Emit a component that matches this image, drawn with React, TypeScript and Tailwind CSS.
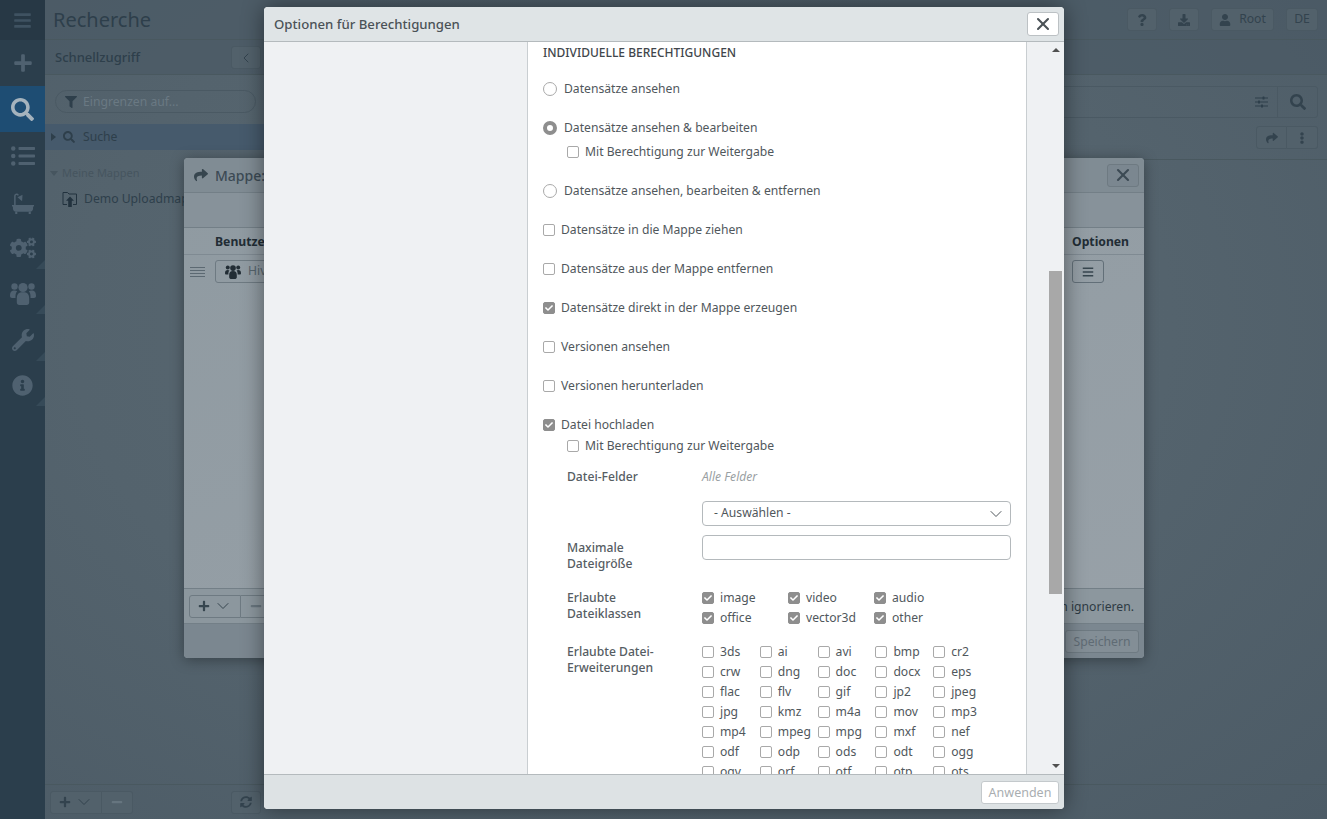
import { ChevronDown, ChevronLeft, X } from "lucide-react";
import {
  FaBars,
  FaCheck,
  FaCogs,
  FaDownload,
  FaEllipsisV,
  FaFilter,
  FaInfoCircle,
  FaListUl,
  FaMinus,
  FaPlus,
  FaQuestion,
  FaSearch,
  FaShare,
  FaSyncAlt,
  FaUser,
  FaWrench,
} from "react-icons/fa";

const extensions = [
  "3ds", "ai", "avi", "bmp", "cr2",
  "crw", "dng", "doc", "docx", "eps",
  "flac", "flv", "gif", "jp2", "jpeg",
  "jpg", "kmz", "m4a", "mov", "mp3",
  "mp4", "mpeg", "mpg", "mxf", "nef",
  "odf", "odp", "ods", "odt", "ogg",
  "ogv", "orf", "otf", "otp", "ots",
];

const classes = [
  "image", "video", "audio",
  "office", "vector3d", "other",
];

function GroupIcon({ className = "" }: { className?: string }) {
  return (
    <svg className={className} viewBox="0 0 26 24" fill="currentColor">
      <circle cx="4.5" cy="5.5" r="3.2" />
      <circle cx="21.5" cy="5.5" r="3.2" />
      <path d="M0 15c0-4 1.5-5.6 4.5-5.6 1.2 0 2 .3 2.7.8C6 11.500 5.500 13 5.500 15.500V17H2c-1.200 0-2-.8-2-2z" />
      <path d="M26 15c0-4-1.500-5.600-4.500-5.600-1.200 0-2 .3-2.700.8 1.200 1.300 1.700 2.800 1.700 5.300V17H24c1.200 0 2-.8 2-2z" />
      <circle cx="13" cy="6.500" r="4.600" />
      <path d="M6.800 18c0-5 1.700-6.700 6.200-6.700s6.200 1.700 6.200 6.700v3.500c0 1.400-1 2.500-2.400 2.500H9.200c-1.400 0-2.400-1.100-2.400-2.500z" />
    </svg>
  );
}

function BathIcon({ className = "" }: { className?: string }) {
  return (
    <svg className={className} viewBox="0 0 24 24" fill="currentColor">
      <path d="M0 13h24v1.800h-1V17c0 2-1.400 3.500-3.300 3.500H4.300C2.400 20.500 1 19 1 17v-2.200H0z" />
      <path d="M3.500 20.500h2.300V23H3.500zM18.200 20.500h2.300V23h-2.300z" />
      <path d="M2.300 13V3.500C2.300 1.600 3.600.5 5 .5c1.200 0 2.200.7 2.600 1.800L6.300 3C6.100 2.500 5.600 2.200 5 2.200c-.6 0-1 .5-1 1.300V13z" />
      <path d="M6 4.500L11.500 1.800 11 9z" />
    </svg>
  );
}

function SlidersIcon({ className = "" }: { className?: string }) {
  return (
    <svg className={className} viewBox="0 0 13 12" fill="currentColor">
      <path d="M0 1.500h13v1H0zM0 5.500h13v1H0zM0 9.500h13v1H0z" />
      <rect x="7.500" y="0.500" width="2" height="3" rx="0.500" />
      <rect x="3" y="4.500" width="2" height="3" rx="0.500" />
      <rect x="6" y="8.500" width="2" height="3" rx="0.500" />
    </svg>
  );
}

function Check({ on = false }: { on?: boolean }) {
  return (
    <span
      className={`-mt-px flex h-3 w-3 shrink-0 items-center justify-center rounded-[2px] border ${
        on ? "border-[#8e8e8e] bg-[#8e8e8e]" : "border-[#a9a9a9] bg-white"
      }`}
    >
      {on && <FaCheck className="h-2 w-2 text-white" />}
    </span>
  );
}

function Radio({ on = false }: { on?: boolean }) {
  return (
    <span
      className={`-mt-px h-[14px] w-[14px] shrink-0 rounded-full bg-white ${
        on ? "border-[4px] border-[#8e8e8e]" : "border border-[#a9a9a9]"
      }`}
    />
  );
}

function RadioRow({ label, on, className = "" }: { label: string; on?: boolean; className?: string }) {
  return (
    <div className={`flex h-5 items-center gap-[7px] ${className}`}>
      <Radio on={on} />
      <span>{label}</span>
    </div>
  );
}

function CheckRow({ label, on, className = "" }: { label: string; on?: boolean; className?: string }) {
  return (
    <div className={`flex h-5 items-center gap-[6px] ${className}`}>
      <Check on={on} />
      <span className="whitespace-nowrap">{label}</span>
    </div>
  );
}

function DimButton({ children, className = "" }: { children: React.ReactNode; className?: string }) {
  return (
    <div
      className={`flex h-[23px] items-center justify-center rounded-[3px] border border-[#4a5963] bg-[#52616b] text-[#33434e] ${className}`}
    >
      {children}
    </div>
  );
}

function NavItem({
  icon,
  active = false,
  corner = false,
  className = "",
}: {
  icon: React.ReactNode;
  active?: boolean;
  corner?: boolean;
  className?: string;
}) {
  return (
    <div
      className={`relative flex h-[46px] items-center justify-center text-[#4f6170] ${
        active ? "bg-[#1e4d73] text-[#a5b3bd]" : ""
      } ${className}`}
    >
      {icon}
      {corner && (
        <svg className="absolute bottom-[2px] right-0" width="9" height="9" viewBox="0 0 9 9">
          <path d="M9 0v9H0z" fill="#364a58" />
        </svg>
      )}
    </div>
  );
}

function Sidebar() {
  return (
    <div className="flex w-[45px] shrink-0 flex-col bg-[#2b3e4c]">
      <div className="flex h-10 items-center justify-center bg-[#273845] text-[#3f5261]">
        <FaBars className="h-[19px] w-[19px]" />
      </div>
      <div className="flex flex-col">
        <NavItem icon={<FaPlus className="h-5 w-5" />} />
        <NavItem active icon={<FaSearch className="h-[23px] w-[23px]" />} />
        <NavItem className="mt-[1px]" icon={<FaListUl className="h-6 w-6" />} />
        <NavItem className="mt-[2px]" icon={<BathIcon className="h-[22px] w-[24px]" />} />
        <NavItem corner className="-mt-[2px]" icon={<FaCogs className="h-[26px] w-[26px]" />} />
        <NavItem corner className="-mt-[1px]" icon={<GroupIcon className="h-6 w-[26px]" />} />
        <NavItem corner className="mt-[1px]" icon={<FaWrench className="h-[22px] w-[22px]" />} />
        <NavItem corner className="-mt-[1px]" icon={<FaInfoCircle className="h-[21px] w-[21px]" />} />
      </div>
    </div>
  );
}

function Background() {
  return (
    <div className="flex min-w-0 flex-1 flex-col bg-[radial-gradient(ellipse_at_45%_40%,#5a6972_0%,#54636d_55%,#4c5b66_100%)] text-[12.2px]">
      <div className="flex h-10 shrink-0 items-center justify-between border-b border-[#49585f] bg-[#4a5964]/60 pl-2 pr-[9px]">
        <span className="text-[20px] text-[#2e3f4b]">Recherche</span>
        <div className="flex items-center gap-3">
          <DimButton className="w-[30px]"><FaQuestion className="h-3 w-3" /></DimButton>
          <DimButton className="w-[30px]"><FaDownload className="h-3 w-3" /></DimButton>
          <DimButton className="w-[63px] gap-2 text-[#6d7c86]">
            <FaUser className="h-3 w-3 text-[#33434e]" />
            Root
          </DimButton>
          <DimButton className="w-[32px] text-[#6d7c86]">DE</DimButton>
        </div>
      </div>
      <div className="flex h-[35px] shrink-0 items-center border-b border-[#49585f] bg-[#4a5964]/60 pl-[10px] pt-px">
        <span className="w-[176px] text-[13px] font-medium text-[#2e3f4b]">Schnellzugriff</span>
        <DimButton className="w-[30px] text-[#2e3f4b]"><ChevronLeft className="h-4 w-4" strokeWidth={1.5} /></DimButton>
      </div>
      <div className="flex min-h-0 flex-1">
        <div className="flex w-[219px] shrink-0 flex-col">
          <div className="mt-[15px] ml-[10px] flex h-[23px] w-[201px] items-center gap-[6px] rounded-full border border-[#4a5963] pl-[9px] pt-px text-[#6a7983]">
            <FaFilter className="h-3 w-3 text-[#2e3f4b]" />
            Eingrenzen auf...
          </div>
          <div className="mt-[11px] flex h-[26px] items-center bg-[#465a6c] pl-[6px] text-[#2e3f4b]">
            <svg width="5" height="8" viewBox="0 0 5 8" className="mr-[7px]"><path d="M0 0l5 4-5 4z" fill="#2e3f4b" /></svg>
            <FaSearch className="mr-[8px] h-3 w-3" />
            Suche
          </div>
          <div className="mt-[15px] flex h-[16px] items-center pl-[5px] text-[11px] text-[#46555f]">
            <svg width="8" height="5" viewBox="0 0 8 5" className="mr-1"><path d="M0 0h8L4 5z" fill="#46555f" /></svg>
            Meine Mappen
          </div>
          <div className="mt-[9px] flex h-[18px] items-center whitespace-nowrap pl-[17px] text-[#2e3f4b]">
            <svg width="16" height="16" viewBox="0 0 16 16" className="mr-[6px] shrink-0">
              <path d="M5 13.500H1V1.500h4.500L7 3h7.500v10.500H11" fill="none" stroke="#22323e" strokeWidth="1" />
              <path d="M8 5.500l4 4.200H9.800V16H6.200V9.700H4z" fill="#22323e" />
            </svg>
            Demo Uploadmappe
          </div>
        </div>
        <div className="flex flex-1 flex-col items-end pr-[9px]">
          <div className="mt-[11px] flex h-8 w-full items-center justify-end rounded-[3px] border border-[#4a5963]">
            <div className="flex h-full w-[33px] items-center justify-center border-r border-[#4a5963] text-[#2e3f4b]">
              <SlidersIcon className="h-3 w-[13px]" />
            </div>
            <div className="flex h-full w-[39px] items-center justify-center text-[#33434e]">
              <FaSearch className="h-4 w-4" />
            </div>
          </div>
          <div className="mt-[8px] flex">
            <DimButton className="w-[31px] rounded-r-none"><FaShare className="h-3 w-3" /></DimButton>
            <DimButton className="w-[31px] rounded-l-none border-l-0"><FaEllipsisV className="h-3 w-3" /></DimButton>
          </div>
          <div className="mt-[10px] -mr-[9px] w-[calc(100%+9px)] border-t border-[#49585f]" />
        </div>
      </div>
      <div className="flex h-[35px] shrink-0 items-center border-t border-[#49585f] pl-[5px]">
        <div className="flex">
          <DimButton className="w-[52px] gap-[3px] rounded-r-none">
            <FaPlus className="h-3 w-3" />
            <ChevronDown className="h-5 w-5" strokeWidth={1.2} />
          </DimButton>
          <DimButton className="w-[31px] rounded-l-none border-l-0 text-[#66757f]"><FaMinus className="h-3 w-3" /></DimButton>
        </div>
        <DimButton className="ml-[98px] w-[30px]"><FaSyncAlt className="h-3 w-3" /></DimButton>
      </div>
    </div>
  );
}

function FolderDialog() {
  return (
    <div className="absolute left-[184px] top-[158px] flex h-[500px] w-[960px] flex-col rounded-[4px] bg-[linear-gradient(160deg,#8f9aa1_0%,#98a1a8_100%)] text-[12.2px] shadow-[0_2px_14px_rgba(0,0,0,0.35)]">
      <div className="flex h-[35px] shrink-0 items-center justify-between rounded-t-[4px] border-b border-[#737f87] bg-[#808c94] pl-[10px] pr-[5px]">
        <div className="flex items-center gap-[7px] text-[14px] font-medium text-[#3c4a54]">
          <FaShare className="h-[14px] w-[14px] text-[#37464f]" />
          Mappe: Demo Uploadmappe
        </div>
        <div className="flex h-[23px] w-[32px] items-center justify-center rounded-[3px] border border-[#6e7a82] bg-[#7b8790] text-[#3c4a54]">
          <X className="h-5 w-5" strokeWidth={2.5} />
        </div>
      </div>
      <div className="h-[35px] shrink-0 border-b border-[#737f87] bg-[#87929a]" />
      <div className="flex h-[27px] shrink-0 items-center justify-between border-b border-[#7f8a92] pl-[31px] pr-[15px] pt-[3px] font-bold text-[#222d35]">
        <span>Benutzer</span>
        <span className="w-[57px]">Optionen</span>
      </div>
      <div className="flex h-[33px] shrink-0 items-center pl-[6px] pr-[40px]">
        <div className="flex h-[10px] w-[15px] flex-col justify-between">
          <div className="h-px bg-[#5c6972]" />
          <div className="h-px bg-[#5c6972]" />
          <div className="h-px bg-[#5c6972]" />
          <div className="h-px bg-[#5c6972]" />
        </div>
        <div className="ml-[10px] flex h-[23px] w-[200px] items-center gap-[7px] rounded-[3px] border border-[#6e7a82] pl-[9px] text-[#56646d]">
          <GroupIcon className="h-[15px] w-[16px] text-[#222d35]" />
          Hive
        </div>
        <div className="ml-auto flex h-[23px] w-[32px] items-center justify-center rounded-[3px] border border-[#626f78] text-[#37464f]">
          <FaBars className="h-3 w-3" />
        </div>
      </div>
      <div className="flex-1" />
      <div className="flex h-[36px] shrink-0 items-center justify-between border-y border-[#737f87] bg-[#8c979e] pl-[5px] pr-[10px]">
        <div className="flex">
          <div className="flex h-[23px] w-[52px] items-center justify-center gap-[3px] rounded-l-[3px] border border-[#6e7a82] text-[#37464f]">
            <FaPlus className="h-3 w-3" />
            <ChevronDown className="h-5 w-5" strokeWidth={1.2} />
          </div>
          <div className="flex h-[23px] w-[31px] items-center justify-center rounded-r-[3px] border border-l-0 border-[#6e7a82] text-[#69767f]">
            <FaMinus className="h-3 w-3" />
          </div>
        </div>
        <span className="mt-[2px] text-[#2e3b44]">Berechtigungen ignorieren.</span>
      </div>
      <div className="flex flex-1 grow-0 basis-[34px] items-center justify-end rounded-b-[4px] bg-[#7b8790] pr-[5px] pt-px">
        <div className="flex h-[23px] w-[74px] items-center justify-center rounded-[3px] border border-[#6e7a82] bg-[#838e96] pt-[2px] text-[#5f6b74]">
          Speichern
        </div>
      </div>
    </div>
  );
}

function OptionsDialog() {
  return (
    <div className="absolute left-[264px] top-[7px] flex h-[802px] w-[800px] flex-col overflow-hidden rounded-[4px] bg-white text-[12.15px] text-[#50575c] shadow-[0_0_22px_rgba(0,0,0,0.45)]">
      <div className="flex h-[35px] shrink-0 items-center justify-between border-b border-[#b4babd] bg-[#dfe4e6] pl-[10px] pr-[5px]">
        <span className="pt-px text-[13.2px] font-medium text-[#4b5257]">Optionen für Berechtigungen</span>
        <div className="flex h-6 w-[32px] items-center justify-center rounded-[3px] border border-[#bcc1c4] bg-white text-[#4b5257]">
          <X className="h-5 w-5" strokeWidth={2.5} />
        </div>
      </div>
      <div className="flex min-h-0 flex-1">
        <div className="w-[264px] shrink-0 border-r border-[#c9ced1] bg-[#eff1f3]" />
        <div className="min-w-0 flex-1 overflow-hidden pl-[15px] pt-px">
          <div className="flex h-5 items-center text-[12px] font-medium text-[#3f464b]">
            INDIVIDUELLE BERECHTIGUNGEN
          </div>
          <RadioRow label="Datensätze ansehen" className="mt-4" />
          <RadioRow label="Datensätze ansehen & bearbeiten" on className="mt-[19px]" />
          <CheckRow label="Mit Berechtigung zur Weitergabe" className="ml-6 mt-1" />
          <RadioRow label="Datensätze ansehen, bearbeiten & entfernen" className="mt-[19px]" />
          <CheckRow label="Datensätze in die Mappe ziehen" className="mt-[19px]" />
          <CheckRow label="Datensätze aus der Mappe entfernen" className="mt-[19px]" />
          <CheckRow label="Datensätze direkt in der Mappe erzeugen" on className="mt-[19px]" />
          <CheckRow label="Versionen ansehen" className="mt-[19px]" />
          <CheckRow label="Versionen herunterladen" className="mt-[19px]" />
          <CheckRow label="Datei hochladen" on className="mt-[19px]" />
          <CheckRow label="Mit Berechtigung zur Weitergabe" className="ml-6 mt-px" />

          <div className="ml-6 mt-[11px] grid grid-cols-[135px_309px] font-medium text-[#565d63]">
            <div className="flex h-5 items-center">Datei-Felder</div>
            <div className="flex h-5 items-center font-normal italic text-[#9a9fa3]">Alle Felder</div>

            <div className="col-start-2 mt-[14px] flex h-[25px] items-center justify-between rounded-[4px] border border-[#b4b9bc] pl-[11px] pr-[4px] font-normal text-[#50575c]">
              - Auswählen -
              <ChevronDown className="h-5 w-5" strokeWidth={1.2} />
            </div>

            <div className="mt-[14px] w-[90px] leading-4">Maximale Dateigröße</div>
            <div className="mt-[9px] h-[25px] rounded-[4px] border border-[#b4b9bc]" />

            <div className="mt-[18px] w-[90px] leading-4">Erlaubte Dateiklassen</div>
            <div className="mt-[16px] grid grid-cols-[86px_86px_86px] font-normal text-[#50575c]">
              {classes.map((c) => (
                <CheckRow key={c} label={c} on />
              ))}
            </div>

            <div className="mt-[16px] w-[100px] leading-4">Erlaubte Datei-Erweiterungen</div>
            <div className="mt-[14px] grid grid-cols-[repeat(5,57.8px)] font-normal text-[#50575c]">
              {extensions.map((e) => (
                <CheckRow key={e} label={e} />
              ))}
            </div>
          </div>
        </div>
        <div className="flex w-[38px] shrink-0 flex-col items-end border-l border-[#c9ced1] bg-[#eff1f3] pr-[2px]">
          <div className="flex h-4 w-[13px] items-center justify-center">
            <svg width="8" height="4" viewBox="0 0 8 4"><path d="M4 0l4 4H0z" fill="#505050" /></svg>
          </div>
          <div className="mt-[213px] h-[323px] w-[13px] bg-[#a8a8a8]" />
          <div className="mt-auto flex h-4 w-[13px] items-center justify-center">
            <svg width="8" height="4" viewBox="0 0 8 4"><path d="M0 0h8L4 4z" fill="#505050" /></svg>
          </div>
        </div>
      </div>
      <div className="flex h-[35px] shrink-0 items-center justify-end border-t border-[#b4babd] bg-[#dde2e4] pr-[5px] pt-px">
        <div className="flex h-[23px] w-[78px] items-center justify-center rounded-[3px] border border-[#c4c9cc] bg-white pt-[2px] text-[12.5px] text-[#a9aeb1]">
          Anwenden
        </div>
      </div>
    </div>
  );
}

export default function App() {
  return (
    <div className="relative flex h-[819px] w-[1327px] overflow-hidden font-['Noto_Sans',sans-serif]">
      <Sidebar />
      <Background />
      <FolderDialog />
      <OptionsDialog />
    </div>
  );
}
